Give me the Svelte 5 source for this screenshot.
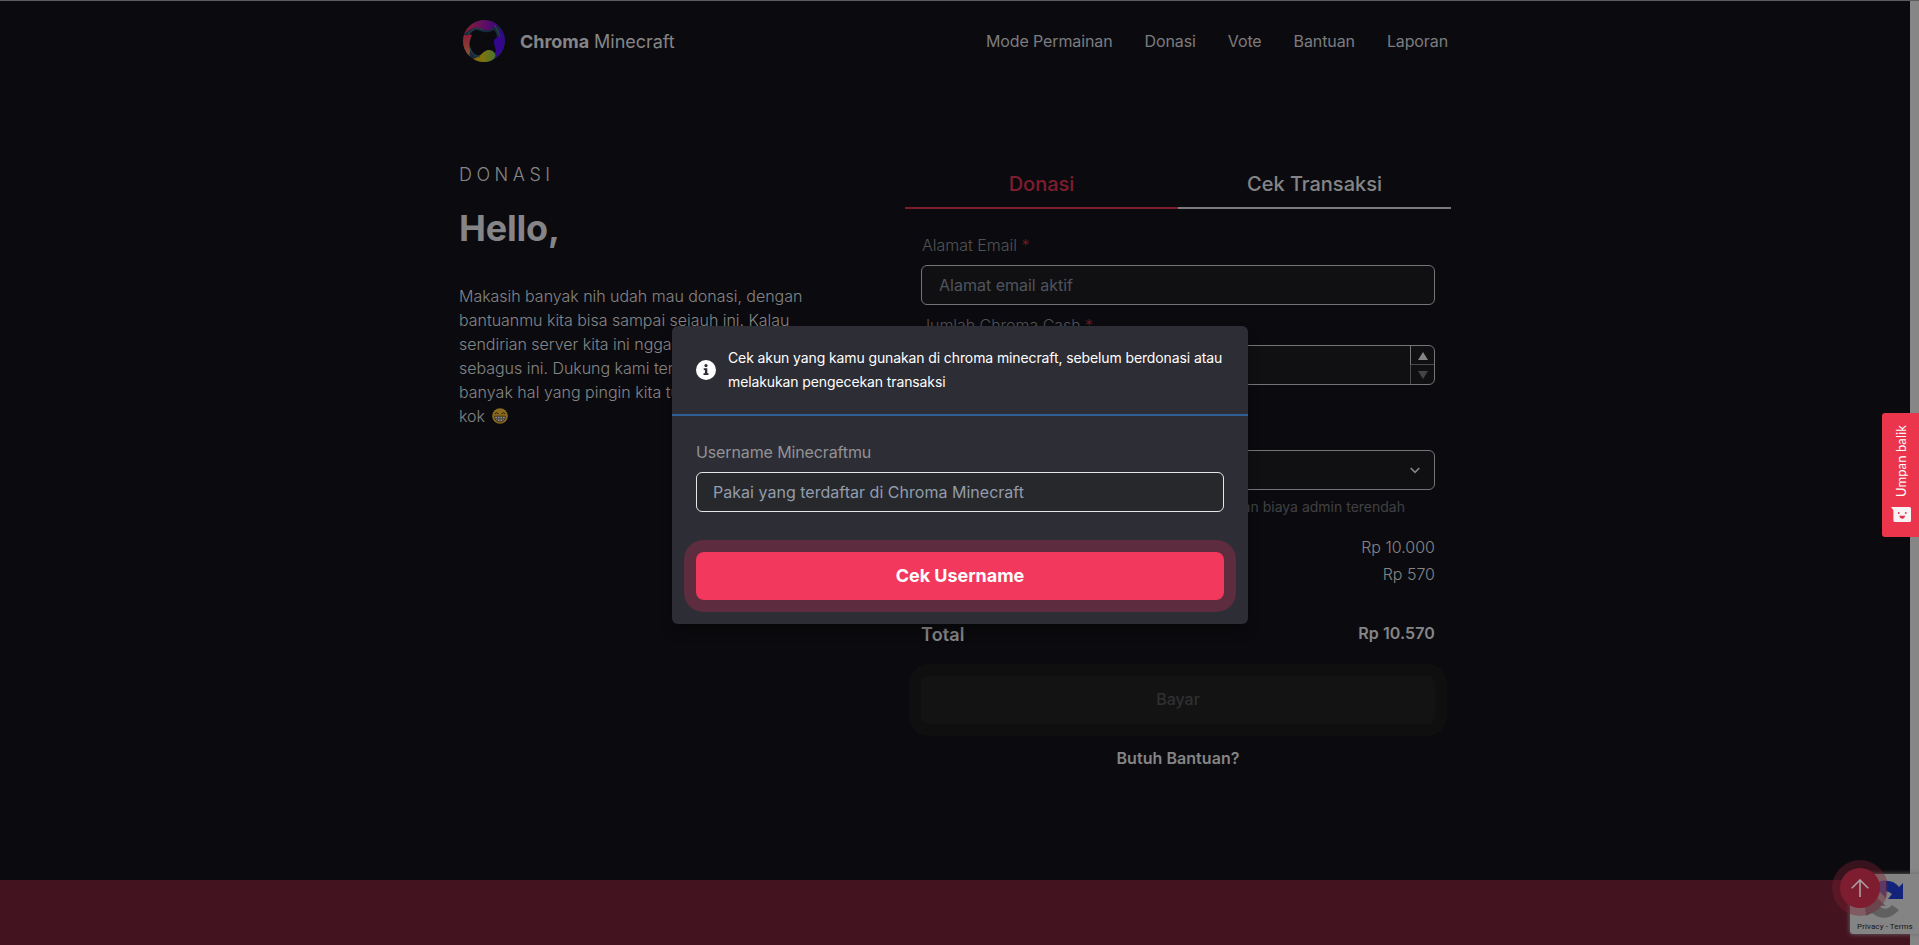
<script>
  const links = ['Mode Permainan', 'Donasi', 'Vote', 'Bantuan', 'Laporan'];
  const intro = [
    'Makasih banyak nih udah mau donasi, dengan',
    'bantuanmu kita bisa sampai sejauh ini. Kalau',
    'sendirian server kita ini nggak bisa',
    'sebagus ini. Dukung kami terus ya,',
    'banyak hal yang pingin kita tunjukin'
  ];
</script>

<div class="page">
  <div class="view">
    <header>
      <div class="brand">
        <svg width="42" height="42" viewBox="0 0 42 42">
          <defs>
            <linearGradient id="top" x1="0" y1="0" x2="1" y2="0">
              <stop offset="0" stop-color="#8c2222" />
              <stop offset=".4" stop-color="#6f1455" />
              <stop offset="1" stop-color="#380480" />
            </linearGradient>
            <linearGradient id="left" x1="0" y1="0" x2="0" y2="1">
              <stop offset="0" stop-color="#8f1a38" />
              <stop offset="1" stop-color="#86602a" />
            </linearGradient>
            <linearGradient id="bottom" x1="0" y1="0" x2="1" y2="0">
              <stop offset="0" stop-color="#8a6006" />
              <stop offset=".45" stop-color="#80740c" />
              <stop offset="1" stop-color="#467530" />
            </linearGradient>
            <clipPath id="disc"><circle cx="21" cy="21" r="21" /></clipPath>
          </defs>
          <g clip-path="url(#disc)">
            <path d="M0 0H42V42H0Z M12 9C19 12 24 14 31 10C34 13 33 17 36 20C33 25 34 29 32 33C28 29 23 29 20 34C13 37 9 33 8 28C5 22 9 19 7 14Z" fill="#182a3c" fill-rule="evenodd" />
            <path d="M0 15C5 0 34-8 36 7C30 4 30 12 22 10C14 6 9 7 0 15Z" fill="url(#top)" />
            <path d="M0 14C4 17 7 13 9 15C7 20 5 24 7 29C8 34 4 33 9 40L-2 38Z" fill="url(#left)" />
            <path d="M37 5C43 10 46 32 31 38C36 30 30 28 31 20C33 17 36 18 37 14C38 10 36 8 37 5Z" fill="#33068c" />
            <path d="M9 39C18 38 19 31 25 30C30 29 34 35 32 37C28 44 13 45 9 39Z" fill="url(#bottom)" />
            <path d="M5 14C11 8 16 8 20 10M32 5C33 10 36 12 37 17M7 28C8 33 12 36 17 37" fill="none" stroke="#29414c" stroke-width="1.1" />
          </g>
        </svg>
        <span class="name"><b>Chroma</b> Minecraft</span>
      </div>
      <nav>
        {#each links as link}<span>{link}</span>{/each}
      </nav>
    </header>

    <main>
      <section class="intro">
        <div class="kicker">DONASI</div>
        <h1>Hello,</h1>
        <div class="text">
          {#each intro as line, i}<div class:loose={i === 4}>{line}</div>{/each}
          <div class="last">
            kok
            <svg width="16" height="16" viewBox="0 0 16 16">
              <circle cx="8" cy="8" r="7.8" fill="#8a6a1c" />
              <path d="M2.8 5.9Q4.6 3.6 6.5 5.9M9.5 5.9Q11.4 3.6 13.2 5.9" fill="none" stroke="#2a1c0a" stroke-width="1" />
              <path d="M2.6 8.2H13.4Q13.2 13.8 8 13.9Q2.8 13.8 2.6 8.2Z" fill="#8b8b8b" stroke="#33230c" stroke-width=".8" />
              <path d="M3 10.8H13M5.4 8.4V13M8 8.4V13.8M10.6 8.4V13" stroke="#3d3426" stroke-width=".8" />
            </svg>
          </div>
        </div>
      </section>

      <section class="panel">
        <div class="tabs">
          <div class="tab on">Donasi</div>
          <div class="tab">Cek Transaksi</div>
        </div>
        <div class="form">
          <div class="label">Alamat Email <i>*</i></div>
          <div class="field">Alamat email aktif</div>
          <div class="label second">Jumlah Chroma Cash <i>*</i></div>
          <div class="field amount">
            <div class="steps">
              <div class="up"><svg width="10" height="8"><path d="M5 0L10 8H0Z" fill="#858585" /></svg></div>
              <div class="down"><svg width="10" height="8"><path d="M0 0H10L5 8Z" fill="#444" /></svg></div>
            </div>
          </div>
          <div class="field pick">
            <svg width="10" height="7" viewBox="0 0 10 7"><path d="M.7 1L5 5.4L9.3 1" fill="none" stroke="#858587" stroke-width="1.6" /></svg>
          </div>
          <div class="help">QRIS dengan biaya admin terendah</div>
          <div class="row r1"><span></span><span>Rp 10.000</span></div>
          <div class="row r2"><span></span><span>Rp 570</span></div>
          <div class="row total"><span>Total</span><b>Rp 10.570</b></div>
          <div class="pay">Bayar</div>
          <div class="ask">Butuh Bantuan?</div>
        </div>
      </section>
    </main>
    <footer></footer>
  </div>
  <div class="gutter"></div>

  <div class="recaptcha">
    <svg width="40" height="42" viewBox="0 0 40 42">
      <path d="M14 4Q27 0 34 9L38 5V21H23L27 16Q22 11 14 14Z" fill="#13237a" />
      <path d="M12 5Q17 2 21 3V20L15 14Q12 17 12 21L4 15Q7 9 12 5Z" fill="#4a4d86" />
      <path d="M0 28L9 17L21 28H14Q21 34 27 27L34 32Q21 46 7 35L1 38Z" fill="#606061" />
    </svg>
    <span>Privacy - Terms</span>
  </div>
  <div class="to-top">
    <svg width="18" height="18" viewBox="0 0 18 18"><path d="M9 18V1M0.7 9.3L9 1L17.3 9.3" fill="none" stroke="#aaa0a2" stroke-width="1.6" /></svg>
  </div>
  <div class="feedback">
    <span>Umpan balik</span>
    <svg width="20" height="15" viewBox="0 0 20 15">
      <path d="M0 0H18.5Q20 0 20 1.5V13.5Q20 15 18.5 15H4Q2.4 15 2.4 13.5V3.2Z" fill="#f7f3f4" />
      <circle cx="7.7" cy="6" r=".9" fill="#e03048" /><circle cx="14.8" cy="6" r=".9" fill="#e03048" />
      <path d="M8.2 8.8H14.2Q13.5 11.8 11.2 11.8Q9 11.8 8.2 8.8Z" fill="#e03048" />
    </svg>
  </div>

  <div class="modal">
    <div class="notice">
      <svg width="20" height="20" viewBox="0 0 20 20">
        <circle cx="10" cy="10" r="10" fill="#fff" />
        <circle cx="10" cy="5.6" r="1.6" fill="#2d2d35" />
        <path d="M7.7 8.3H11.3V13.2H12.5V15H7.5V13.2H8.9V10H7.7Z" fill="#2d2d35" />
      </svg>
      <p>Cek akun yang kamu gunakan di chroma minecraft, sebelum berdonasi atau<br />melakukan pengecekan transaksi</p>
    </div>
    <div class="body">
      <div class="m-label">Username Minecraftmu</div>
      <div class="m-field">Pakai yang terdaftar di Chroma Minecraft</div>
      <div class="m-btn">Cek Username</div>
    </div>
  </div>
</div>

<style>
  :global(body) { margin: 0; background: #0b0b0f; }
  .page {
    position: relative; display: flex; width: 1919px; height: 945px; overflow: hidden;
    font-family: Inter, sans-serif; font-size: 16px; line-height: 24px; color: #858587;
    background: #0b0b0f;
  }
  .page * { box-sizing: border-box; }
  .view { width: 1910px; display: flex; flex-direction: column; border-top: 1px solid #5a5e60; }
  .gutter { width: 9px; background: #868686; border-top: 1px solid #5a5e60; }
  header { display: flex; justify-content: space-between; align-items: center; height: 81px; padding: 0 462px 2px 463px; flex: none; }
  .brand { display: flex; align-items: center; gap: 15px; }
  .name { font-size: 18px; line-height: 28px; letter-spacing: -.04px; padding-top: 2px; }
  .name b { font-weight: 700; }
  nav { display: flex; gap: 32px; color: #7c7c7f; letter-spacing: -.11px; }
  main { display: flex; height: 798px; padding-left: 459px; justify-content: space-between; padding-right: 459px; flex: none; }
  footer { flex: 1; background: #431320; }
  .intro { padding-top: 79px; }
  .kicker { font-size: 18px; line-height: 28px; letter-spacing: 4.5px; font-weight: 300; }
  h1 { margin: 19px 0 36px; font-size: 36px; line-height: 40px; font-weight: 700; letter-spacing: -.2px; }
  .text { font-weight: 300; white-space: nowrap; letter-spacing: -.03px; }
  .loose { letter-spacing: .02px; }
  .last { display: flex; align-items: center; gap: 7px; }
  .panel { width: 546px; padding-top: 80px; }
  .tabs { display: flex; }
  .tab { flex: 1; height: 47px; padding-top: 8px; text-align: center; font-size: 20px; line-height: 28px; font-weight: 500; border-bottom: 2px solid #7c7c7f; }
  .tab.on { color: #7f1c2e; border-color: #7f1c2e; }
  .form { padding: 24px 16px 0; }
  .label { color: #525254; font-weight: 300; margin-bottom: 8px; padding-left: 1px; }
  .label i { font-style: normal; color: #7a1a20; }
  .second { margin-top: 8px; padding-left: 0; letter-spacing: -.04px; }
  .field { height: 40px; border: 1px solid #757578; border-radius: 6px; background: #101012; padding: 7px 17px; color: #4f545e; }
  .amount { padding: 0; display: flex; justify-content: flex-end; }
  .steps { width: 24px; display: flex; flex-direction: column; }
  .steps div { display: flex; align-items: center; justify-content: center; }
  .steps .up { height: 19px; border-left: 1px solid #757578; border-bottom: 1px solid #4a4a4d; }
  .up svg { margin-top: 2px; }
  .steps .down { height: 19px; border-left: 1px solid #4a4a4d; }
  .pick { margin-top: 65px; display: flex; align-items: center; justify-content: flex-end; padding: 0 14px; }
  .help { margin: 7px 30px 0 0; font-size: 14px; line-height: 20px; text-align: right; color: #414144; font-weight: 400; }
  .row { display: flex; justify-content: space-between; }
  .r1 { margin-top: 18px; font-weight: 300; }
  .r2 { margin-top: 3px; font-weight: 300; }
  .total { margin-top: 35px; font-weight: 700; }
  .total span { font-size: 18px; line-height: 28px; font-weight: 600; letter-spacing: .15px; }
  .total b { font-weight: 600; letter-spacing: .1px; }
  .pay { margin-top: 27px; height: 48px; border-radius: 8px; background: #131314; box-shadow: 0 0 0 12px #0f0f10; color: #303032; font-weight: 500; text-align: center; line-height: 47px; }
  .ask { margin-top: 22px; text-align: center; font-weight: 600; letter-spacing: .05px; }

  .modal { position: absolute; left: 672px; top: 326px; width: 576px; height: 298px; border-radius: 6px; background: #2d2d35; box-shadow: 0 8px 12px rgba(0, 0, 0, .25); }
  .notice { display: flex; align-items: center; gap: 12px; height: 90px; padding: 0 24px; border-bottom: 2px solid #2c6096; color: #fff; }
  .notice svg { flex: none; }
  .notice p { margin: 0; font-size: 14px; line-height: 24px; white-space: nowrap; letter-spacing: -.11px; }
  .body { padding: 24px 24px 0; }
  .m-label { color: #929295; font-weight: 400; letter-spacing: -.12px; }
  .m-field { margin-top: 8px; height: 40px; border: 1px solid #e6e6ea; border-radius: 6px; background: #26282c; color: #939cab; padding: 7px 16px; letter-spacing: .02px; }
  .m-btn { margin-top: 40px; height: 48px; border-radius: 8px; background: #f2385c; box-shadow: 0 0 0 12px #5d2c3e; color: #fff; text-align: center; font-size: 18px; line-height: 47px; font-weight: 700; letter-spacing: -.05px; }

  .feedback { position: absolute; left: 1882px; top: 413px; width: 37px; height: 124px; border-radius: 3px 0 0 3px; background: #eb354c; display: flex; flex-direction: column; align-items: center; justify-content: space-between; padding: 12px 0 15px 1px; color: #fff; }
  .feedback span { writing-mode: vertical-rl; transform: rotate(180deg); font-family: Lato, sans-serif; font-size: 13px; line-height: 20px; letter-spacing: .1px; }
  .recaptcha { position: absolute; left: 1850px; top: 874px; width: 72px; height: 60px; border-radius: 3px; background: #848484; box-shadow: 0 0 5px #6b6b6b; display: flex; flex-direction: column; color: #161616; }
  .recaptcha svg { margin: 4px 0 0 15px; }
  .recaptcha span { margin: 2px 0 0 7px; font-family: Roboto, sans-serif; font-size: 8px; line-height: 10px; letter-spacing: .1px; white-space: nowrap; }
  .to-top { position: absolute; left: 1840px; top: 868px; width: 40px; height: 40px; border-radius: 50%; background: #7e1d2f; box-shadow: 0 0 0 8px rgba(126, 29, 47, .4); display: flex; align-items: center; justify-content: center; }
</style>
